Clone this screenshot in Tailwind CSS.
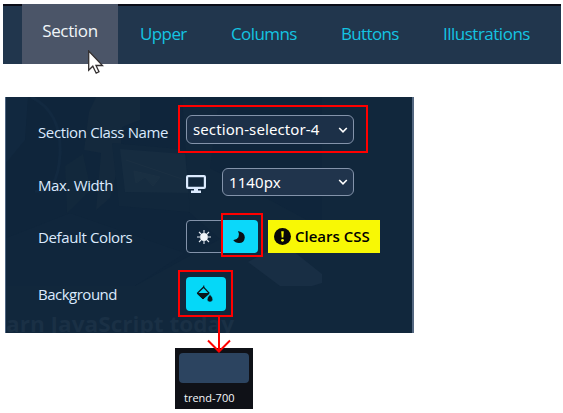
<!DOCTYPE html>
<html lang="en">
<head>
<meta charset="utf-8">
<title>Section settings</title>
<script src="https://cdn.jsdelivr.net/npm/@tailwindcss/browser@4"></script>
</head>
<body class="bg-white w-[563px] h-[413px] overflow-hidden pt-1 font-['Open_Sans','Noto_Sans',sans-serif]">
<nav class="relative ml-[3px] w-[558px] h-[60px] bg-[#21364d] border-t-2 border-[#0b0d18] flex pl-[19px] text-[17px] text-[#14c4e2] whitespace-nowrap">
  <a class="-mt-[2px] w-[96px] h-[60px] bg-[#4b5568] text-[#f1f5f9] flex justify-center pt-[14px] leading-[26px]"><span class="tracking-[-0.35px]">Section</span></a>
  <a class="ml-[22px] w-[91px] pt-[15px] leading-[26px] tracking-[-0.6px]">Upper</a>
  <a class="w-[110px] pt-[15px] leading-[26px] tracking-[-0.6px]">Columns</a>
  <a class="w-[102px] pt-[15px] leading-[26px] tracking-[-0.65px]">Buttons</a>
  <a class="pt-[15px] leading-[26px] tracking-[-0.5px]">Illustrations</a>
  <svg class="absolute left-[85px] top-[44px]" width="16" height="25" viewBox="0 0 16 25"><path d="M.7 1V20.2L4.8 16.2L8.2 23.2L11 21.8L8 15.5H14.5Z" fill="#fff" stroke="#332f30" stroke-width="1.3"/></svg>
</nav>
<main class="relative mt-[33px] ml-[5px] w-[409px] h-[236px] bg-[#11273c] border-l border-[#4e6480] text-[15px] text-[#dbeafe]">
  <svg class="absolute inset-0" width="408" height="236" viewBox="6 97 408 236">
    <path d="M6 97H322V286H6Z" fill="#0f253b"/>
    <path d="M6 97H28L25 140L6 163Z" fill="#11283f"/>
    <path d="M31 97Q62 112 60 154Q58 195 35 191" fill="none" stroke="#122940" stroke-width="3"/>
    <path d="M96 97H140V120L122 127L120 160L110 198L96 210L101 153L84 150L89 112Z" fill="#14293d"/>
    <path d="M112 143L192 150L200 213L119 206Z" fill="#11273c"/><path d="M120 149L185 154L189 193L125 192Z" fill="#162c40"/>
    <path d="M126 160L185 180M134 171L160 177L153 186L145 177L136 183Z" stroke="#1b3043" fill="#192f42"/>
    <path d="M65 166L83 154L91 190L67 213Z" fill="#12283c"/>
    <path d="M6 238L70 213L185 253L135 286H6Z" fill="#10263c"/><path d="M182 97L218 108L210 168L322 228V286H135L220 239L190 213Z" fill="#11273c"/>
    <path d="M248 262L283 243L322 274V283L312 286H280Z" fill="#182e44"/>
    <text x="6" y="332" font-family="Open Sans" font-size="20.5" font-weight="700" fill="#1a3045" textLength="228" lengthAdjust="spacingAndGlyphs">arn JavaScript today</text>
    <path d="M413 97V333" stroke="#71859e" stroke-width="1.4"/>
  </svg>
  <div class="relative pl-8 pt-[18px] flex flex-col">
    <div class="flex h-[29px] items-center">
      <span class="w-[148px] pt-[5px] tracking-[-0.37px] whitespace-nowrap">Section Class Name</span>
      <div class="relative w-[168px] h-[29px] rounded-md border border-[#8393aa] bg-[#1c3048] flex items-center justify-between pl-1.5 pr-[5px] text-white font-['Noto_Sans',sans-serif]">
        <span class="tracking-[0.1px]">section-selector-4</span>
        <svg width="10" height="8" viewBox="0 0 10 8" fill="none" stroke="#fff" stroke-width="1.6"><path d="M1.2 2L5 5.8L8.8 2"/></svg>
        <i class="absolute -left-[9px] -top-[11px] w-[190px] h-[48px] border-2 border-[#ff0000]"></i>
      </div>
    </div>
    <div class="mt-6 flex h-7 items-center">
      <span class="w-[148px] pt-[7px] tracking-[-0.37px]">Max. Width</span>
      <svg class="mt-[4px]" width="20" height="18" viewBox="0 0 20 18"><path fill="#dbeafe" fill-rule="evenodd" d="M2 0H18Q20 0 20 2V12Q20 14 18 14H12V15.5H15V18H5V15.5H8V14H2Q0 14 0 12V2Q0 0 2 0ZM2.2 2.2V11.7H17.8V2.2Z"/></svg>
      <div class="ml-4 w-[132px] h-[28px] rounded-md border border-[#8393aa] bg-[#20344c] flex items-center justify-between pl-1.5 pr-[5px] text-white font-['Noto_Sans',sans-serif]">
        <span class="tracking-[0.1px]">1140px</span>
        <svg width="10" height="8" viewBox="0 0 10 8" fill="none" stroke="#fff" stroke-width="1.6"><path d="M1.2 2L5 5.8L8.8 2"/></svg>
      </div>
    </div>
    <div class="mt-6 flex h-[33px] items-center">
      <span class="w-[148px] pt-[1px] tracking-[-0.37px]">Default Colors</span>
      <div class="relative w-[72px] h-[33px] flex">
        <div class="w-9 rounded-l border border-[#8393aa] flex items-center justify-center">
          <svg width="16" height="16" viewBox="0 0 16 16"><circle cx="8" cy="8" r="3.9" fill="#f1f5f9"/><path d="M8 1V4M8 12V15M1 8H4M12 8H15M3 3L5 5M11 11L13 13M13 3L11 5M5 11L3 13" stroke="#e2e8f0" stroke-width="1.1"/></svg>
        </div>
        <div class="w-9 rounded-r bg-[#0bd8fa] flex items-center justify-center">
          <svg class="-ml-[2px]" width="12" height="12" viewBox="0 0 12 12"><path d="M5 0Q11.8 1.3 11.8 6.5Q11.3 12 6 12Q2.1 12 .2 9Q3.5 9.2 5.4 6.2Q6.8 3.2 5 0Z" fill="#0a1115"/></svg>
        </div>
        <i class="absolute left-[35px] -top-[7px] w-[42px] h-[44px] border-2 border-[#ff0000]"></i>
      </div>
      <div class="ml-[10px] w-[112px] h-[33px] bg-[#f8f805] text-black font-semibold flex items-center pl-[6px] whitespace-nowrap">
        <svg width="17" height="17" viewBox="0 0 16 16"><circle cx="8" cy="8" r="8" fill="#080808"/><path d="M6.8 3H9.2L8.8 9H7.2Z" fill="#f8f805"/><circle cx="8" cy="11.6" r="1.3" fill="#f8f805"/></svg>
        <span class="ml-[4px]">Clears CSS</span>
      </div>
    </div>
    <div class="mt-6 flex h-[34px] items-center">
      <span class="w-[148px] pt-[1px] tracking-[-0.5px]">Background</span>
      <div class="relative w-10 h-[34px] rounded bg-[#05d8f8] flex items-center justify-center">
        <svg class="-ml-[3px]" width="18" height="18" viewBox="0 0 18 18"><path d="M7.5 2.2L13 8L7 13.3L1.6 8Z" fill="none" stroke="#0b161b" stroke-width="1.2"/><path d="M1.2 8.5H13L7 14ZM7.8 .5V3" fill="#0b161b" stroke="#0b161b"/><path d="M14 9.5Q17 12.4 16.8 14.3Q16.5 17 14 17Q11.2 17 11.2 14.3Q11.1 12.4 14 9.5Z" fill="#0b161b" stroke="#05d8f8" stroke-width=".5"/></svg>
        <i class="absolute -left-[8px] -top-[7px] w-[55px] h-[47px] border-2 border-[#ff0000]"></i>
        <svg class="absolute left-[21px] top-[39px]" width="24" height="37" viewBox="0 0 24 37"><path d="M12 0V36M1 24.5L12 35.5L23 24.5" fill="none" stroke="#f00" stroke-width="2"/></svg>
      </div>
    </div>
  </div>
</main>
<figure class="mt-[15px] ml-[175px] w-[78px] h-[61px] bg-[#0f1117] pt-[5px] pl-1">
  <div class="w-[70px] h-[30px] rounded bg-[#2c4460]"></div>
  <figcaption class="ml-[5px] mt-[7px] text-[11px] leading-4 text-[#f4f7fb] whitespace-nowrap">trend-700</figcaption>
</figure>
</body>
</html>
